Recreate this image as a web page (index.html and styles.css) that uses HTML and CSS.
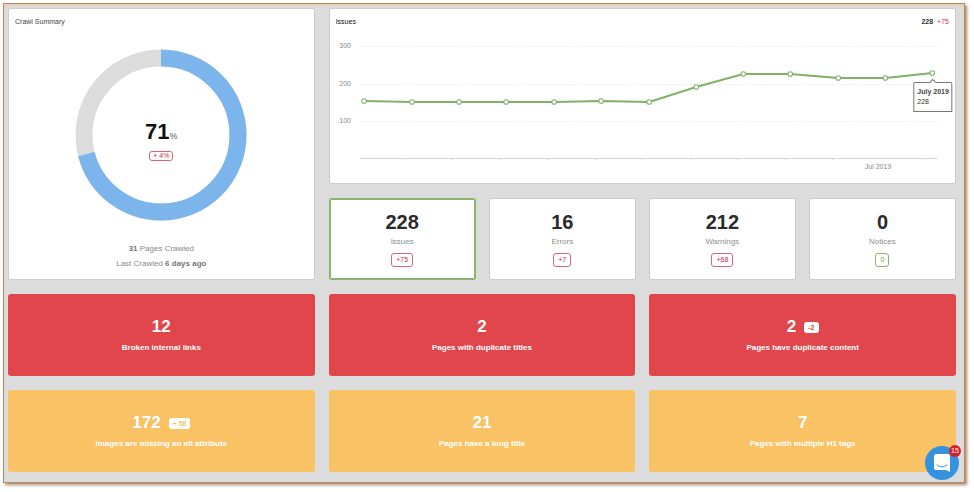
FILE: index.html
```html
<!DOCTYPE html>
<html lang="en">
<head>
<meta charset="utf-8">
<title>Crawl Summary</title>
<link rel="stylesheet" href="styles.css">
</head>
<body>
<main class="dashboard">
  <section class="card summary">
    <h2 class="card-title">Crawl Summary</h2>
    <div class="donut">
      <svg class="donut-ring" viewBox="0 0 172 172" aria-hidden="true">
        <circle class="ring-rest" cx="86" cy="86" r="77"/>
        <circle class="ring-value" cx="86" cy="86" r="77" pathLength="100" transform="rotate(-90 86 86)"/>
      </svg>
      <div class="donut-label">
        <div class="percent">71<span class="percent-sign">%</span></div>
        <span class="badge badge-small">+ 4%</span>
      </div>
    </div>
    <div class="crawl-info">
      <p><b>31</b> Pages Crawled</p>
      <p>Last Crawled <b>6 days ago</b></p>
    </div>
  </section>

  <div class="right">
    <section class="card chart">
      <header class="chart-head">
        <h2 class="card-title title-dark">Issues</h2>
        <div class="totals"><b>228</b><span class="delta">+75</span></div>
      </header>
      <svg class="plot" viewBox="330 31 625 152" role="img" aria-label="Issues over time">
        <path class="grid" d="M360 46.500H937M360 84.500H937M360 121.500H937"/>
        <path class="axis" d="M360 158.500H937M405.500 158v2M452.500 158v2M500.500 158v2M547.500 158v2M595.500 158v2M642.500 158v2M690.500 158v2M737.500 158v2M785.500 158v2M832.500 158v2M925.500 158v2"/>
        <g class="tick-text" text-anchor="end">
          <text x="351" y="48">300</text>
          <text x="351" y="86">200</text>
          <text x="351" y="123">100</text>
          <text x="891" y="169">Jul 2019</text>
        </g>
        <polyline class="line" points="364,101 412,102 459,102 506,102 554,102 601,101 649,102 696,87 743,74 790,74 838,78 885,78 932,73"/>
        <g class="dots">
          <circle cx="364" cy="101" r="2.300"/><circle cx="412" cy="102" r="2.300"/><circle cx="459" cy="102" r="2.300"/><circle cx="506" cy="102" r="2.300"/><circle cx="554" cy="102" r="2.300"/><circle cx="601" cy="101" r="2.300"/><circle cx="649" cy="102" r="2.300"/><circle cx="696" cy="87" r="2.300"/><circle cx="743" cy="74" r="2.300"/><circle cx="790" cy="74" r="2.300"/><circle cx="838" cy="78" r="2.300"/><circle cx="885" cy="78" r="2.300"/><circle cx="932" cy="73" r="2.300"/>
        </g>
        <path class="tip" d="M914.500 82.500H929.500L932.500 79.500L935.500 82.500H950.500Q951.500 82.500 951.500 83.500V111.500H913.500V83.500Q913.500 82.500 914.500 82.500Z"/>
        <text class="tip-title" x="917" y="94">July 2019</text>
        <text class="tip-value" x="917" y="104">228</text>
      </svg>
    </section>

    <div class="stats">
      <button class="card stat selected" type="button"><strong>228</strong><span>Issues</span><span class="badge">+75</span></button>
      <button class="card stat" type="button"><strong>16</strong><span>Errors</span><span class="badge">+7</span></button>
      <button class="card stat" type="button"><strong>212</strong><span>Warnings</span><span class="badge">+68</span></button>
      <button class="card stat" type="button"><strong>0</strong><span>Notices</span><span class="badge badge-ok">0</span></button>
    </div>
  </div>

  <a class="tile error" href="#broken"><span class="count">12</span><span>Broken internal links</span></a>
  <a class="tile error" href="#titles"><span class="count">2</span><span>Pages with duplicate titles</span></a>
  <a class="tile error" href="#content"><span class="count">2<span class="chip">-2</span></span><span>Pages have duplicate content</span></a>
  <a class="tile warning" href="#alt"><span class="count">172<span class="chip">+ 58</span></span><span>Images are missing an alt attribute</span></a>
  <a class="tile warning" href="#long"><span class="count">21</span><span>Pages have a long title</span></a>
  <a class="tile warning" href="#h1"><span class="count">7</span><span>Pages with multiple H1 tags</span></a>
</main>

<button class="chat" type="button" aria-label="Messages">
  <svg viewBox="0 0 18 20" aria-hidden="true">
    <path fill="#fff" d="M3 1H15Q17 1 17 3V19L13 17H3Q1 17 1 15V3Q1 1 3 1Z"/>
    <path fill="none" stroke="#3492de" stroke-linecap="round" d="M4 12Q9 16 14 12"/>
  </svg>
  <span class="unread">15</span>
</button>
</body>
</html>
```
FILE: styles.css
```css
* { box-sizing: border-box; }

body {
  margin: 0;
  padding: 3px 9px 9px 3px;
  background: #fff;
  font-family: "Liberation Sans", Arial, sans-serif;
  font-size: 8px;
  line-height: 10px;
  color: #333;
}

h2, p { margin: 0; }

button {
  font: inherit;
  color: inherit;
  cursor: pointer;
}

.dashboard {
  display: grid;
  grid-template-columns: repeat(3, 1fr);
  gap: 14px;
  padding: 4px 8px 10px 4px;
  background: #dcdcdc;
  border: 1px solid #b08a62;
  box-shadow: inset 0 2px 3px #e6cfba, 2px 2px 3px #a88468;
}

.card {
  background: #fff;
  border: 1px solid #ccc;
  border-radius: 2px;
}

.card-title {
  font-size: 7px;
  font-weight: normal;
  line-height: 10px;
  color: #444;
}

.title-dark { color: #111; }

.summary {
  display: flex;
  flex-direction: column;
  padding: 8px 6px 0;
}

.donut {
  display: grid;
  place-items: center;
  margin-top: 22px;
}

.donut-ring, .donut-label { grid-area: 1 / 1; }

.donut-ring { width: 172px; }

.donut-ring circle {
  fill: none;
  stroke-width: 17;
}

.ring-rest { stroke: #dcdcdc; }

.ring-value {
  stroke: #7cb5ec;
  stroke-dasharray: 71 29;
}

.donut-label {
  display: flex;
  flex-direction: column;
  align-items: center;
  gap: 4px;
  padding-top: 12px;
}

.percent {
  font-size: 22px;
  font-weight: bold;
  line-height: 22px;
  color: #111;
}

.percent-sign {
  font-size: 9px;
  font-weight: normal;
  color: #555;
}

.crawl-info {
  margin-top: 20px;
  font-size: 8px;
  line-height: 15px;
  text-align: center;
  color: #888;
}

.crawl-info b { color: #777; }

.right {
  grid-column: span 2;
  display: flex;
  flex-direction: column;
  gap: 14px;
}

.chart-head {
  display: flex;
  justify-content: space-between;
  padding: 8px 6px 4px;
}

.totals {
  display: flex;
  gap: 4px;
  font-size: 7px;
}

.delta { color: #d9304c; }

.plot {
  display: block;
  width: 100%;
}

.grid { stroke: #f0f0f0; stroke-dasharray: 5 2; }
.axis { stroke: #d4d4d4; fill: none; }
.tick-text { font-size: 7px; fill: #888; }
.line { fill: none; stroke: #80b168; stroke-width: 2; }
.dots { fill: #fff; stroke: #80b168; stroke-width: 1; }
.tip { fill: #fff; stroke: #777; }
.tip-title { font-size: 7px; font-weight: bold; fill: #444; }
.tip-value { font-size: 7px; fill: #333; }

.stats {
  display: grid;
  grid-template-columns: repeat(4, 1fr);
  gap: 13px;
}

.stat {
  display: flex;
  flex-direction: column;
  align-items: center;
  min-height: 82px;
  padding: 12px 4px 10px;
  color: #8a8f8f;
}

.stat strong {
  margin-bottom: 4px;
  font-size: 20px;
  line-height: 22px;
  color: #2b2b2b;
}

.stat .badge { margin-top: 6px; }

.selected { outline: 1px solid #8ab56e; outline-offset: -2px; border-color: #8ab56e; }

.badge {
  padding: 1px 4px;
  border: 1px solid #d8657c;
  border-radius: 3px;
  font-size: 7px;
  line-height: 10px;
  color: #d0284a;
}

.badge-small {
  padding: 0 3px;
  line-height: 8px;
}

.badge-ok {
  border-color: #8ab56e;
  color: #6ba04c;
}

.tile {
  display: flex;
  flex-direction: column;
  align-items: center;
  justify-content: center;
  gap: 6px;
  min-height: 82px;
  border-radius: 3px;
  font-weight: bold;
  color: #fff;
  text-decoration: none;
}

.error { background: #e0464c; }
.warning { background: #f9c265; }

.count {
  display: flex;
  align-items: center;
  gap: 8px;
  font-size: 17px;
  line-height: 20px;
}

.chip {
  padding: 1px 4px;
  border-radius: 3px;
  background: #fff;
  font-size: 7px;
  line-height: 9px;
  color: #e0464c;
}

.warning .chip { color: #f9c265; }

.chat {
  position: fixed;
  right: 15px;
  bottom: 12px;
  display: grid;
  place-items: center;
  width: 34px;
  height: 34px;
  padding: 0;
  border: 0;
  border-radius: 50%;
  background: #3492de;
}

.chat svg { width: 18px; }

.unread {
  position: absolute;
  top: -1px;
  right: -2px;
  width: 12px;
  height: 12px;
  border-radius: 50%;
  background: #d5202c;
  font-size: 7px;
  line-height: 12px;
  color: #fff;
}
```
